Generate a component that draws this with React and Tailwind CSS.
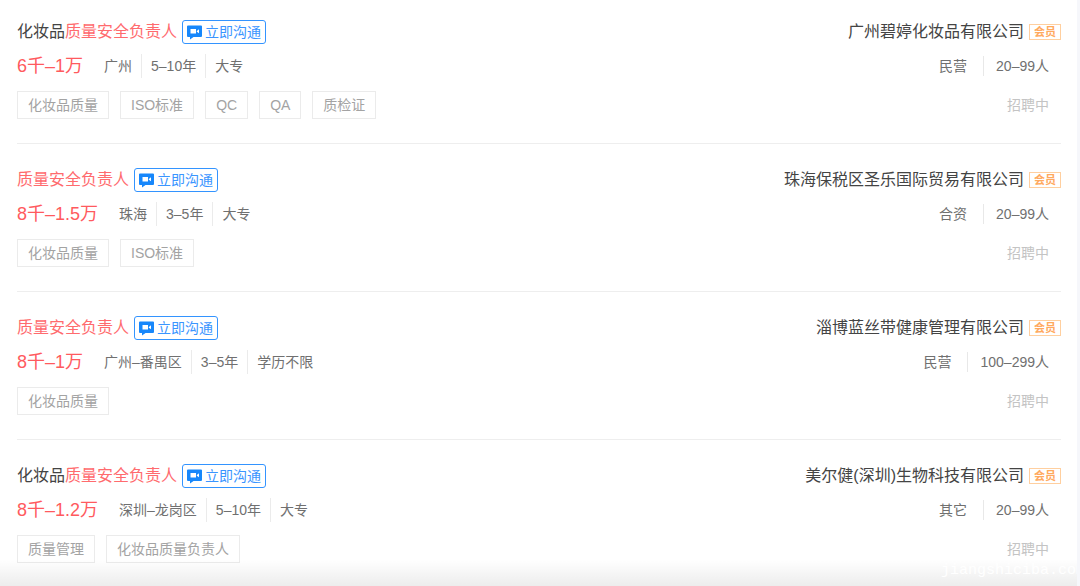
import React from 'react';

const jobs = [
  {
    prefix: '化妆品',
    salary: '6千–1万',
    info: ['广州', '5–10年', '大专'],
    tags: ['化妆品质量', 'ISO标准', 'QC', 'QA', '质检证'],
    company: '广州碧婷化妆品有限公司',
    type: '民营',
    size: '20–99人',
  },
  {
    prefix: '',
    salary: '8千–1.5万',
    info: ['珠海', '3–5年', '大专'],
    tags: ['化妆品质量', 'ISO标准'],
    company: '珠海保税区圣乐国际贸易有限公司',
    type: '合资',
    size: '20–99人',
  },
  {
    prefix: '',
    salary: '8千–1万',
    info: ['广州–番禺区', '3–5年', '学历不限'],
    tags: ['化妆品质量'],
    company: '淄博蓝丝带健康管理有限公司',
    type: '民营',
    size: '100–299人',
  },
  {
    prefix: '化妆品',
    salary: '8千–1.2万',
    info: ['深圳–龙岗区', '5–10年', '大专'],
    tags: ['质量管理', '化妆品质量负责人'],
    company: '美尔健(深圳)生物科技有限公司',
    type: '其它',
    size: '20–99人',
  },
];

function ChatIcon() {
  return (
    <svg width="15" height="15" viewBox="0 0 15 15" className="shrink-0" aria-hidden="true">
      <path d="M1 0.5h13a1 1 0 0 1 1 1v9.500a1 1 0 0 1-1 1H6.500L3 14.500V12H1a1 1 0 0 1-1-1V1.500a1 1 0 0 1 1-1z" fill="#1787fb" />
      <path d="M3.500 4h5.500v4.500H3.500z" fill="#fff" />
      <path d="M9.800 6l2.200-1.700v4L9.800 6.700z" fill="#fff" />
    </svg>
  );
}

function JobItem({ job }) {
  return (
    <li className="flex justify-between border-b border-[#eeeeee] pt-6 pb-6 first:pt-5 last:border-b-0">
      <div>
        <div className="flex h-6 items-center gap-[5px]">
          <a href="#" className="text-base leading-6 text-[#444444]">
            {job.prefix}
            <span className="text-[#ff6b6e]">质量安全负责人</span>
          </a>
          <button className="flex h-6 items-center gap-[3px] rounded-[3px] border border-[#3394ff] px-1 text-sm text-[#3a95ff]">
            <ChatIcon />
            立即沟通
          </button>
        </div>
        <div className="mt-[10px] flex h-6 items-center">
          <span className="mr-3 text-lg leading-6 text-[#ff5a5e]">{job.salary}</span>
          <ul className="flex divide-x divide-[#ebebeb] text-sm leading-6 text-[#707070]">
            {job.info.map((item) => (
              <li key={item} className="px-[9px]">{item}</li>
            ))}
          </ul>
        </div>
        <ul className="mt-[13px] flex gap-[11px]">
          {job.tags.map((tag) => (
            <li key={tag} className="flex h-7 items-center border border-[#ebebeb] px-[10px] text-sm text-[#a3a3a3]">
              {tag}
            </li>
          ))}
        </ul>
      </div>

      <div className="flex flex-col items-end">
        <div className="flex h-6 items-center gap-[5px]">
          <a href="#" className="text-base leading-6 text-[#444444]">{job.company}</a>
          <span className="flex h-4 w-8 items-center justify-center border border-[#ffcf9f] text-[11px] font-bold text-[#ffa95e]">
            会员
          </span>
        </div>
        <div className="mt-[10px] flex h-6 items-center pr-3 text-sm text-[#707070]">
          <span className="pr-4">{job.type}</span>
          <span className="border-l border-[#e8e8e8] pl-3 leading-5">{job.size}</span>
        </div>
        <p className="mt-[13px] pr-3 text-sm leading-7 text-[#c4c4c4]">招聘中</p>
      </div>
    </li>
  );
}

function App() {
  return (
    <main className="relative overflow-hidden border-r-3 border-[#f6f7fb] bg-white pr-4 pl-[17px] font-['Liberation_Sans','Noto_Sans_CJK_SC',sans-serif]">
      <ul>
        {jobs.map((job) => (
          <JobItem key={job.company} job={job} />
        ))}
      </ul>
      {/* Bottom fade with the site mark */}
      <div className="pointer-events-none absolute inset-x-0 bottom-0 h-7 bg-linear-to-b from-transparent to-[#00000013]" />
      <span className="absolute -right-2 bottom-1 font-['Liberation_Mono',monospace] text-[15px] leading-6 text-white">
        jiangshiciba.com
      </span>
    </main>
  );
}

export default App;
